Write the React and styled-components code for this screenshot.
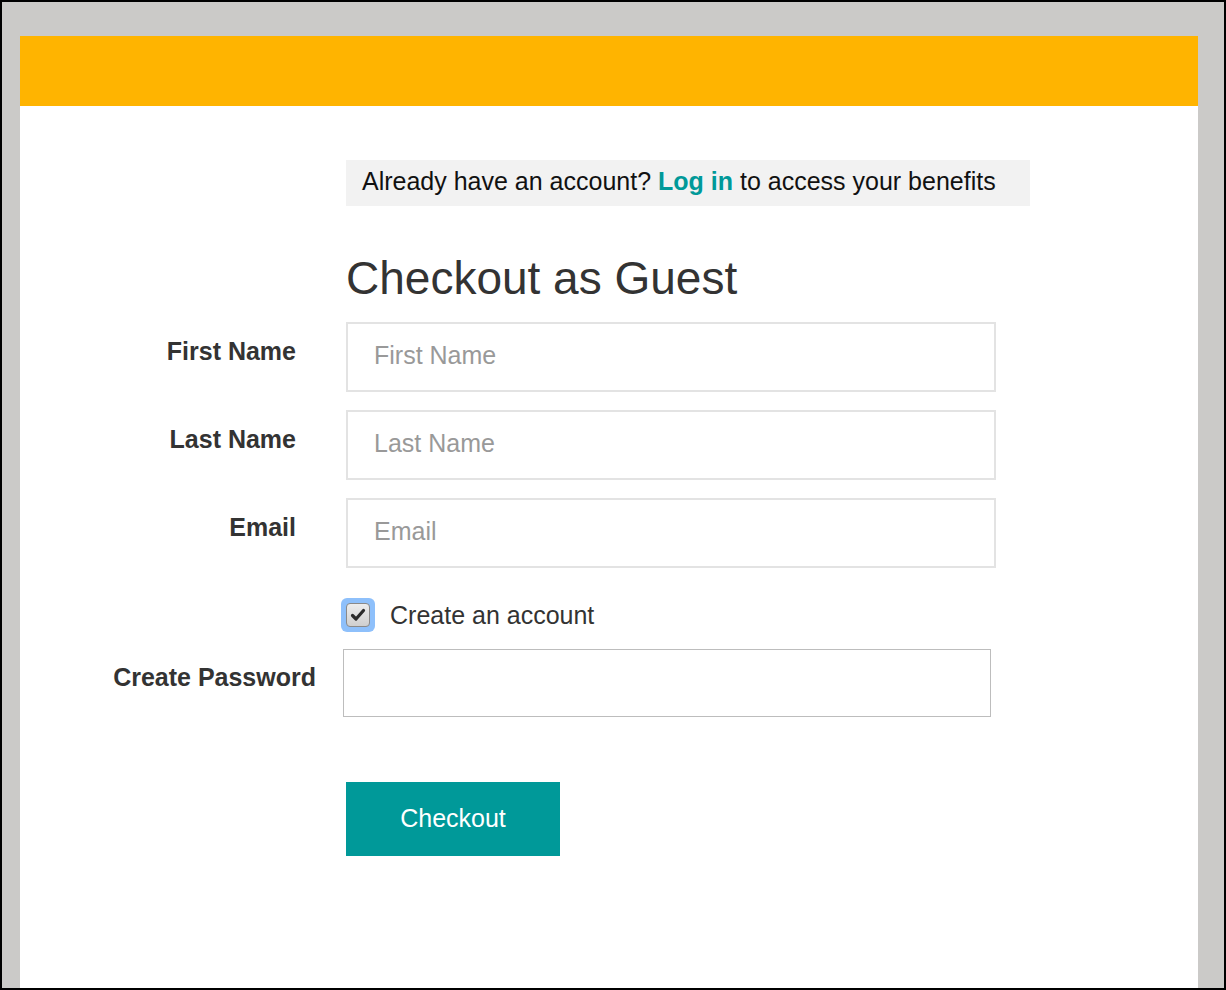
import React from 'react'
import styled, { createGlobalStyle } from 'styled-components'

const GlobalStyle = createGlobalStyle`
  * { box-sizing: border-box; }
  html, body { margin: 0; padding: 0; }
  body {
    font-family: "Liberation Sans", Arial, Helvetica, sans-serif;
    background: #cbcac8;
  }
`

export default function App() {
  return (
    <>
      <GlobalStyle />
      <Frame>
        <Card>
          <TopBar />
          <Content>
            <FormArea>
              <Banner>
                Already have an account? <LoginLink href="#">Log in</LoginLink> to access your benefits
              </Banner>
              <Heading>Checkout as Guest</Heading>

              <FieldRow>
                <Label>First Name</Label>
                <Input placeholder="First Name" />
              </FieldRow>
              <FieldRow>
                <Label>Last Name</Label>
                <Input placeholder="Last Name" />
              </FieldRow>
              <FieldRow>
                <Label>Email</Label>
                <Input placeholder="Email" />
              </FieldRow>

              <CheckRow>
                <CheckLabel>
                  <HiddenInput type="checkbox" defaultChecked />
                  <CheckRing>
                    <CheckBox>
                      <svg width="18" height="18" viewBox="0 0 18 18">
                        <path d="M3.5 9.5 L7 13 L14.5 4.5" fill="none" stroke="#2b2b2b" strokeWidth="3.2" strokeLinecap="round" strokeLinejoin="round" />
                      </svg>
                    </CheckBox>
                  </CheckRing>
                  <CheckText>Create an account</CheckText>
                </CheckLabel>
              </CheckRow>

              <FieldRow wide>
                <Label wide>Create Password</Label>
                <Input type="password" plain />
              </FieldRow>

              <ButtonRow>
                <CheckoutButton>Checkout</CheckoutButton>
              </ButtonRow>
            </FormArea>
          </Content>
        </Card>
      </Frame>
    </>
  )
}

const Frame = styled.div`
  width: 1226px;
  height: 990px;
  border: 2px solid #000;
  background: #cbcac8;
  padding: 34px 26px 0 18px;
  display: flex;
  overflow: hidden;
`

const Card = styled.div`
  flex: 1;
  background: #fff;
  display: flex;
  flex-direction: column;
`

const TopBar = styled.div`
  height: 70px;
  background: #ffb400;
  flex: none;
`

const Content = styled.div`
  padding-top: 54px;
`

const FormArea = styled.div`
  display: flex;
  flex-direction: column;
`

const Banner = styled.div`
  margin-left: 326px;
  width: 684px;
  height: 46px;
  line-height: 43px;
  background: #f2f2f2;
  padding-left: 16px;
  font-size: 25px;
  color: #111;
  white-space: nowrap;
`

const LoginLink = styled.a`
  color: #009999;
  font-weight: bold;
  text-decoration: none;
`

const Heading = styled.h1`
  margin: 46px 0 17px 326px;
  font-size: 46px;
  line-height: 53px;
  font-weight: normal;
  color: #333;
`

const FieldRow = styled.div`
  display: grid;
  grid-template-columns: ${p => (p.wide ? '296px 648px' : '276px 650px')};
  column-gap: ${p => (p.wide ? '27px' : '50px')};
  margin-bottom: 18px;
  align-items: start;
`

const Label = styled.label`
  text-align: right;
  font-size: 25px;
  line-height: 28px;
  font-weight: bold;
  color: #333;
  padding-top: ${p => (p.wide ? '14px' : '15px')};
  white-space: nowrap;
`

const Input = styled.input`
  height: ${p => (p.plain ? '68px' : '70px')};
  border: ${p => (p.plain ? '1px solid #bdbdbd' : '2px solid #e3e3e3')};
  border-radius: 0;
  padding: 0 26px 3px;
  font-family: inherit;
  font-size: 25px;
  color: #333;
  background: #fff;
  outline: none;

  &::placeholder {
    color: #999;
  }
`

const CheckRow = styled.div`
  margin: 12px 0 17px 321px;
  height: 34px;
  display: flex;
  align-items: center;
`

const CheckLabel = styled.label`
  display: flex;
  align-items: center;
  cursor: pointer;
`

const HiddenInput = styled.input`
  position: absolute;
  opacity: 0;
  width: 0;
  height: 0;
`

const CheckRing = styled.span`
  width: 34px;
  height: 34px;
  border-radius: 6px;
  background: #8ec0fb;
  display: inline-flex;
  align-items: center;
  justify-content: center;
`

const CheckBox = styled.span`
  width: 24px;
  height: 24px;
  border-radius: 4px;
  border: 1px solid #8a8a8a;
  background: linear-gradient(#ededed, #cfcfcf);
  display: inline-flex;
  align-items: center;
  justify-content: center;
`

const CheckText = styled.span`
  margin-left: 15px;
  font-size: 25px;
  color: #333;
`

const ButtonRow = styled.div`
  margin: 47px 0 0 326px;
`

const CheckoutButton = styled.button`
  width: 214px;
  height: 74px;
  border: none;
  background: #009999;
  color: #fff;
  font-family: inherit;
  font-size: 25px;
  padding-bottom: 3px;
  cursor: pointer;
`
